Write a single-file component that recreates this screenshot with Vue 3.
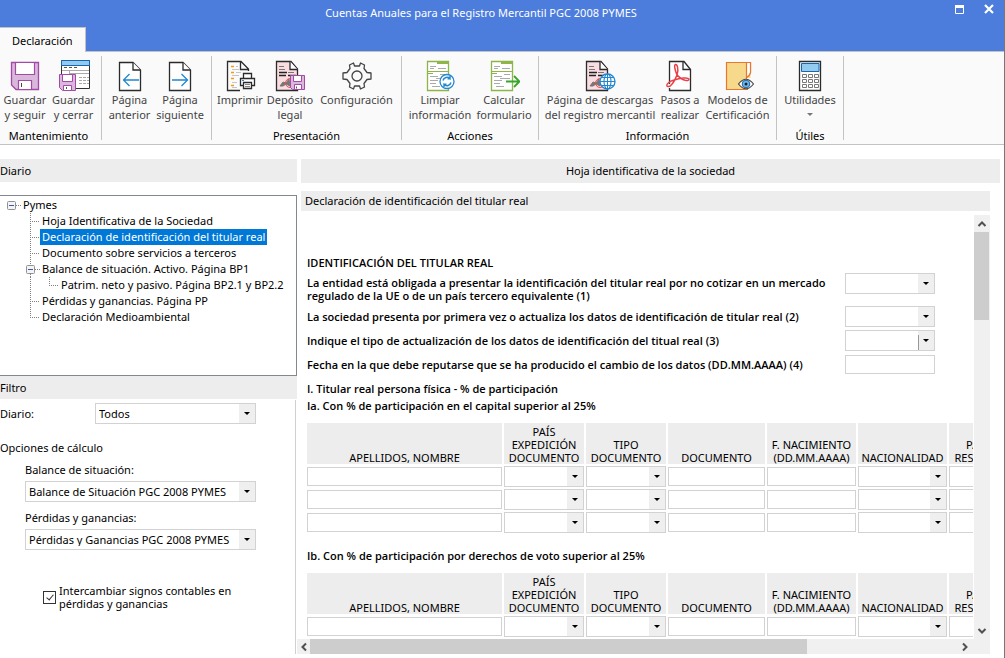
<script setup>
import { ref } from 'vue'

const page = (fill, stroke) =>
  `<path d="M5.500 2.500H19L26.500 10V30.500H5.500Z" fill="${fill}" stroke="${stroke}" stroke-width="1.300"/><path d="M19 2.500V10H26.500" fill="#fff" stroke="${stroke}" stroke-width="1.300"/>`

const disk = (x, y) =>
  `<path d="M${x} ${y}h14v14h-12l-2-2z" fill="#d9b8dc" stroke="#a24aa6"/><path d="M${x + 3} ${y}h8v6h-8zM${x + 4} ${y + 14}v-5h7v5z" fill="#fff" stroke="#a24aa6"/><path d="M${x + 6} ${y + 11}v2" stroke="#555"/>`

const certificate =
  '<path d="M2.500 1.500H17L23.500 9V30.500H2.500Z" fill="#f9dde1" stroke="#2b2b2b" stroke-width="1.300"/><path d="M16 1.500V9.500H23.500" fill="#fff" stroke="#2b2b2b" stroke-width="1.300"/><path d="M5 6.500h5M5 9.500h6M14 12.500h6" stroke="#777"/><path d="M5 12.500h8M5 15.500h7M14 15.500h8" stroke="#222" stroke-width="1.300"/><path d="M6 26l3-4 3 1 3-4 1 7-4-2-3 2z" fill="#777" stroke="#777"/><circle cx="16" cy="23" r="4.500" fill="none" stroke="#ef4a52"/>'

const greenForm =
  '<path d="M3.500 1.500h21v29h-21z" fill="#fff" stroke="#8db548" stroke-width="1.300"/><path d="M13 1h12v3H13z" fill="#8db548"/><path d="M3 11.500h22M3 13.500h6" stroke="#8db548"/><path d="M6 6.500h6M14 8.500h8M6 8.500h4M16 14.500h6M6 16.500h8M12 18.500h10M6 20.500h8M6 23.500h6M8 26.500h8" stroke="#aaa"/>'

const icons = {
  save:
    '<path d="M2.500 2.500h27v27h-22.500l-4.500-4.500z" fill="#d9b8dc" stroke="#a24aa6" stroke-width="1.300"/><path d="M6.500 2.500h19v12h-19zM9.500 29.500v-9h13v9z" fill="#fff" stroke="#a24aa6" stroke-width="1.200"/><path d="M12.500 23v4" stroke="#444"/>',
  saveClose:
    '<path d="M3.500 .5h28v28h-28z" fill="#fff" stroke="#333"/><path d="M3.500 .5h28v5h-28z" fill="#93caf0" stroke="#1667ad"/><path d="M6 7.500h3m2 0h3m2 0h3" stroke="#555"/><path d="M4 10.500h27M11.500 10v6M11 13.500h20M21 17.500h3m1 0h3m1 0h2M21 20.500h3m1 0h3m1 0h2M21 23.500h3m1 0h3m1 0h2" stroke="#aaa"/>' +
    '<path d="M1.500 14.500h16v16h-13l-3-3z" fill="#d9b8dc" stroke="#a24aa6"/><path d="M4.500 14.500h10v7h-10zM5.500 30.500v-5h8v5z" fill="#fff" stroke="#a24aa6"/><path d="M8.500 27v2" stroke="#555"/>',
  previous:
    page('#fff', '#2b2b2b') + '<path d="M25 20H10M15.500 14L9.500 20l6 6" fill="none" stroke="#2187d0" stroke-width="1.300"/>',
  next:
    page('#fff', '#2b2b2b') + '<path d="M8 20H23M17.500 14L23.500 20l-6 6" fill="none" stroke="#2187d0" stroke-width="1.300"/>',
  print:
    '<path d="M16 30.500H3.500V1.500H17L24.500 9v2M16.500 1.500V9.500H25" fill="none" stroke="#2b2b2b" stroke-width="1.300"/><path d="M7 6.500h3M7 12.500h3M7 18.500h3M7 25.500h3" stroke="#f39c12" stroke-width="1.500"/><path d="M8 9.500h7M8 15.500h7M8 22.500h5M8 27.500h5M12 12.500h5M12 6.500h2" stroke="#c5c5c5"/>' +
    '<path d="M19.500 18v-4.500h8V18" fill="#fff" stroke="#2b2b2b" stroke-width="1.300"/><path d="M16.500 18.500h14v7h-14z" fill="#fff" stroke="#2b2b2b" stroke-width="1.300"/><path d="M19.500 22.500h8v6h-8z" fill="#fff" stroke="#2b2b2b" stroke-width="1.300"/><path d="M21 24.500h5M21 26.500h5" stroke="#888"/><path d="M18 20.500h2" stroke="#2187d0"/>',
  deposit: certificate + disk(16.5, 15.5),
  settings:
    '<path d="M12.500 3l1 3h5l1-3 4 2-.5 3.500 3 4 4 .5v6l-4 .5-3 4 .5 3.500-4 2-1-3h-5l-1 3-4-2 .5-3.500-3-4-4-.5v-6l4-.5 3-4L8.500 5z" fill="none" stroke="#444" stroke-width="1.300" stroke-linejoin="round"/><circle cx="16" cy="16" r="5" fill="none" stroke="#444" stroke-width="1.300"/>',
  clean:
    greenForm +
    '<circle cx="23" cy="21.500" r="7" fill="#fff" stroke="#2187d0" stroke-width="1.300"/><path d="M19 20.500a4.200 4.200 0 0 1 7-2v-2.500M26.500 18.800h-3M27 22.500a4.200 4.200 0 0 1-7 2v2.500M19.500 24.200h3" fill="none" stroke="#2187d0" stroke-width="1.400"/>',
  calculate: greenForm + '<path d="M18 21.500h13M26 16l5.500 5.500L26 27" fill="none" stroke="#37a62b" stroke-width="1.800"/>',
  download:
    certificate +
    '<circle cx="23.500" cy="21.500" r="7.500" fill="#fff" stroke="#2187d0" stroke-width="1.300"/><ellipse cx="23.500" cy="21.500" rx="3.500" ry="7.500" fill="none" stroke="#2187d0" stroke-width="1.100"/><path d="M16 21.500h15M17.500 17.500h12M17.500 25.500h12M23.500 14v15" stroke="#2187d0"/>',
  pdf:
    '<path d="M5.500 24V1.500H20L26.500 9.500V30.500H5.500V28" fill="#fff" stroke="#2b2b2b" stroke-width="1.300"/><path d="M19 1.500V9.500H26.500" fill="none" stroke="#2b2b2b" stroke-width="1.300"/><path d="M13 15C10.500 9 10 5 11.500 4.500s3.500 4 1.500 10.500c-2 5-6 12-9 11.500C1 26 4 21.500 10 20c6-2 14-3 15-1 .5 2.500-6 2.500-12-4z" fill="none" stroke="#ea3f47" stroke-width="1.500"/>',
  folder:
    '<path d="M4.500 2.500h24v17l-4 10h-20z" fill="#f7d98c" stroke="none"/><path d="M26 29.500h-21.500v-27h24v10l-1.500 3-2.500 2v8" fill="none" stroke="#e8772e" stroke-width="1.200"/><path d="M25 18h5v8h-5z" fill="#fafafa"/><path d="M24.500 2.500h4v10l-1.500 3-2.500 2z" fill="#fff" stroke="#e8772e" stroke-width="1.200"/><path d="M16.500 24q7.500-9.500 15 0q-7.500 9.500-15 0z" fill="#fff" stroke="#444" stroke-width="1.200"/><circle cx="24" cy="24" r="3.800" fill="#6fb9ee" stroke="#1667ad"/><circle cx="24" cy="24" r="1.500" fill="#222"/>',
  calculator:
    '<path d="M5.500 1.500h21v29h-21z" fill="#fff" stroke="#2b2b2b" stroke-width="1.300"/><path d="M7.500 3.500h17.500v8h-17.500z" fill="#93caf0" stroke="#1667ad"/><path d="M8.500 14.500h4v3h-4zM14.500 14.500h4v3h-4zM20.500 14.500h4v3h-4zM8.500 19.500h4v3h-4zM14.500 19.500h4v3h-4zM20.500 19.500h4v3h-4zM8.500 24.500h4v3h-4zM14.500 24.500h4v3h-4zM20.500 24.500h4v3h-4z" fill="none" stroke="#777"/>',
}

const groups = [
  {
    title: 'Mantenimiento',
    first: true,
    items: [
      { icon: 'save', lines: ['Guardar', 'y seguir'], width: 50 },
      { icon: 'saveClose', lines: ['Guardar', 'y cerrar'], width: 47 },
    ],
  },
  {
    title: '',
    items: [
      { icon: 'previous', lines: ['Página', 'anterior'], width: 47 },
      { icon: 'next', lines: ['Página', 'siguiente'], width: 54 },
    ],
  },
  {
    title: 'Presentación',
    items: [
      { icon: 'print', lines: ['Imprimir'], width: 48 },
      { icon: 'deposit', lines: ['Depósito', 'legal'], width: 52 },
      { icon: 'settings', lines: ['Configuración'], width: 81 },
    ],
  },
  {
    title: 'Acciones',
    items: [
      { icon: 'clean', lines: ['Limpiar', 'información'], width: 68 },
      { icon: 'calculate', lines: ['Calcular', 'formulario'], width: 60 },
    ],
  },
  {
    title: 'Información',
    items: [
      { icon: 'download', lines: ['Página de descargas', 'del registro mercantil'], width: 114 },
      { icon: 'pdf', lines: ['Pasos a', 'realizar'], width: 46 },
      { icon: 'folder', lines: ['Modelos de', 'Certificación'], width: 69 },
    ],
  },
  {
    title: 'Útiles',
    items: [{ icon: 'calculator', lines: ['Utilidades'], menu: true, width: 58 }],
  },
]

const treeLines = {
  blank: '',
  root: 'M14 8.500h5',
  open: 'M9.500 0v4M9.500 13v3M14 8.500h5',
  branch: 'M9.500 0v16M11 8.500h8',
  corner: 'M9.500 0v9M11 8.500h8',
  vertical: 'M9.500 0v16',
}

const tree = [
  { cells: ['root'], text: 'Pymes' },
  { cells: ['blank', 'branch'], text: 'Hoja Identificativa de la Sociedad' },
  { cells: ['blank', 'branch'], text: 'Declaración de identificación del titular real' },
  { cells: ['blank', 'branch'], text: 'Documento sobre servicios a terceros' },
  { cells: ['blank', 'open'], text: 'Balance de situación. Activo. Página BP1' },
  { cells: ['blank', 'vertical', 'corner'], text: 'Patrim. neto y pasivo. Página BP2.1 y BP2.2' },
  { cells: ['blank', 'branch'], text: 'Pérdidas y ganancias. Página PP' },
  { cells: ['blank', 'corner'], text: 'Declaración Medioambiental' },
]

const selected = ref(2)
const swapSigns = ref(true)

const questions = [
  {
    id: 'q1',
    kind: 'select',
    tall: true,
    text: 'La entidad está obligada a presentar la identificación del titular real por no cotizar en un mercado regulado de la UE o de un país tercero equivalente (1)',
  },
  {
    id: 'q2',
    kind: 'select',
    text: 'La sociedad presenta por primera vez o actualiza los datos de identificación de titular real (2)',
  },
  {
    id: 'q3',
    kind: 'select',
    divided: true,
    text: 'Indique el tipo de actualización de los datos de identificación del titual real (3)',
  },
  {
    id: 'q4',
    kind: 'text',
    text: 'Fecha en la que debe reputarse que se ha producido el cambio de los datos (DD.MM.AAAA) (4)',
  },
]

const columns = [
  { key: 'name', lines: ['APELLIDOS, NOMBRE'] },
  { key: 'country', lines: ['PAÍS', 'EXPEDICIÓN', 'DOCUMENTO'], select: true },
  { key: 'kind', lines: ['TIPO', 'DOCUMENTO'], select: true },
  { key: 'document', lines: ['DOCUMENTO'] },
  { key: 'birth', lines: ['F. NACIMIENTO', '(DD.MM.AAAA)'] },
  { key: 'nationality', lines: ['NACIONALIDAD'], select: true },
  { key: 'residence', lines: ['PAÍS DE', 'RESIDENCIA'], select: true },
]

const tables = [
  { id: 'a', title: 'Ia. Con % de participación en el capital superior al 25%' },
  { id: 'b', title: 'Ib. Con % de participación por derechos de voto superior al 25%' },
]
</script>

<template>
  <div class="window">
    <header class="titlebar">
      <h1>Cuentas Anuales para el Registro Mercantil PGC 2008 PYMES</h1>
      <div class="window-buttons">
        <button type="button" aria-label="Maximizar">
          <svg width="12" height="12"><path d="M2.500 3.500h8v7h-8z" fill="none" stroke="#fff" /><path d="M2 2h9v3H2z" fill="#fff" /></svg>
        </button>
        <button type="button" aria-label="Cerrar">
          <svg width="12" height="12"><path d="M2 2l8 8M10 2l-8 8" stroke="#fff" stroke-width="2.200" /></svg>
        </button>
      </div>
      <button type="button" class="tab">Declaración</button>
    </header>

    <nav class="ribbon">
      <section v-for="(group, g) in groups" :key="g" class="group" :class="{ first: group.first }">
        <div class="group-items">
          <button v-for="item in group.items" :key="item.icon" type="button" class="tool" :style="{ width: item.width + 'px' }">
            <svg width="32" height="32" viewBox="0 0 32 32" aria-hidden="true" v-html="icons[item.icon]"></svg>
            <span v-for="line in item.lines" :key="line">{{ line }}</span>
            <i v-if="item.menu" class="menu-arrow"></i>
          </button>
        </div>
        <div class="group-title">{{ group.title }}</div>
      </section>
    </nav>

    <main class="body">
      <aside class="side">
        <h2 class="bar side-bar">Diario</h2>
        <ul class="tree">
          <li v-for="(node, n) in tree" :key="node.text">
            <svg v-for="(cell, c) in node.cells" :key="c" width="19" height="16" aria-hidden="true">
              <path :d="treeLines[cell]" class="dots" />
              <g v-if="cell === 'root' || cell === 'open'">
                <rect x="5.500" y="4.500" width="8" height="8" rx="1" fill="#f4f4f4" stroke="#919191" />
                <path d="M7 8.500h5" stroke="#3c5aa8" />
              </g>
            </svg>
            <button type="button" :class="{ selected: selected === n }" @click="selected = n">{{ node.text }}</button>
          </li>
        </ul>
        <h2 class="bar side-bar">Filtro</h2>
        <form class="filter" @submit.prevent>
          <div class="inline-field">
            <label for="diario">Diario:</label>
            <span class="combo"><select id="diario"><option>Todos</option></select></span>
          </div>
          <h3>Opciones de cálculo</h3>
          <div class="field">
            <label for="balance">Balance de situación:</label>
            <span class="combo"><select id="balance"><option>Balance de Situación PGC 2008 PYMES</option></select></span>
          </div>
          <div class="field">
            <label for="perdidas">Pérdidas y ganancias:</label>
            <span class="combo"><select id="perdidas"><option>Pérdidas y Ganancias PGC 2008 PYMES</option></select></span>
          </div>
          <label class="check">
            <input v-model="swapSigns" type="checkbox" />
            <span>Intercambiar signos contables en pérdidas y ganancias</span>
          </label>
        </form>
      </aside>

      <section class="content">
        <h2 class="bar main-bar">Hoja identificativa de la sociedad</h2>
        <h3 class="bar sub-bar">Declaración de identificación del titular real</h3>
        <div class="scroller">
          <div class="sheet">
            <h4 class="first-heading">IDENTIFICACIÓN DEL TITULAR REAL</h4>
            <div v-for="q in questions" :key="q.id" class="question" :class="{ tall: q.tall }">
              <label :for="q.id">{{ q.text }}</label>
              <span v-if="q.kind === 'select'" class="combo" :class="{ divided: q.divided }">
                <select :id="q.id"><option></option></select>
              </span>
              <input v-else :id="q.id" type="text" />
            </div>
            <h4 class="section-heading">I. Titular real persona física - % de participación</h4>
            <div v-for="t in tables" :key="t.id" class="holders">
              <h4>{{ t.title }}</h4>
              <table>
                <colgroup><col v-for="col in columns" :key="col.key" :class="col.key" /></colgroup>
                <thead>
                  <tr>
                    <th v-for="col in columns" :key="col.key" scope="col">
                      <div v-for="line in col.lines" :key="line">{{ line }}</div>
                    </th>
                  </tr>
                </thead>
                <tbody>
                  <tr v-for="r in 3" :key="r">
                    <td v-for="col in columns" :key="col.key">
                      <span v-if="col.select" class="combo">
                        <select :aria-label="col.lines.join(' ')"><option></option></select>
                      </span>
                      <input v-else type="text" :aria-label="col.lines.join(' ')" />
                    </td>
                  </tr>
                </tbody>
              </table>
            </div>
          </div>
          <div class="vbar">
            <button type="button" aria-label="Subir"><svg width="10" height="8"><path d="M1.500 6L5 2.500 8.500 6" class="chevron" /></svg></button>
            <div class="vthumb"></div>
            <button type="button" class="end" aria-label="Bajar"><svg width="10" height="8"><path d="M1.500 2L5 5.500 8.500 2" class="chevron" /></svg></button>
          </div>
          <div class="hbar">
            <button type="button" aria-label="Izquierda"><svg width="8" height="10"><path d="M6 1.500L2.500 5 6 8.500" class="chevron" /></svg></button>
            <div class="htrack"><div class="hthumb"></div></div>
            <button type="button" aria-label="Derecha"><svg width="8" height="10"><path d="M2 1.500L5.500 5 2 8.500" class="chevron" /></svg></button>
          </div>
          <div class="corner"></div>
        </div>
      </section>
    </main>
  </div>
</template>

<style>
body {
  margin: 0;
}
</style>

<style scoped>
.window {
  display: flex;
  flex-direction: column;
  box-sizing: border-box;
  height: 100vh;
  min-height: 400px;
  overflow: hidden;
  border-right: 1px solid #777;
  background: #fff;
  color: #000;
  font: 11px/13px "Noto Sans", "Open Sans", sans-serif;
}
button,
input,
select {
  box-sizing: border-box;
  margin: 0;
  padding: 0;
  border: 0;
  background: none;
  color: inherit;
  font: inherit;
}
svg {
  display: block;
  flex: none;
}
h1,
h2,
h3,
h4,
ul {
  margin: 0;
  padding: 0;
  font-size: 11px;
  font-weight: normal;
}

.titlebar {
  position: relative;
  display: flex;
  flex: none;
  flex-direction: column;
  justify-content: space-between;
  align-items: flex-start;
  height: 51px;
  border-bottom: 1px solid #c3c3c3;
  background: #4c7cdc;
}
.titlebar h1 {
  align-self: center;
  margin-right: 42px;
  color: #fff;
  line-height: 26px;
}
.window-buttons {
  position: absolute;
  top: 3px;
  right: 9px;
  display: flex;
  gap: 18px;
}
.tab {
  height: 25px;
  padding: 0 12px;
  margin-bottom: -1px;
  border-top: 1px solid #c3c3c3;
  border-right: 1px solid #c3c3c3;
  background: #fafafa;
}

.ribbon {
  display: flex;
  flex: none;
  height: 92px;
  border-bottom: 1px solid #c3c3c3;
  background: #fafafa;
}
.group {
  display: flex;
  flex-direction: column;
  justify-content: space-between;
  margin: 4px 0;
  padding: 4px 4px 0;
  border-right: 1px solid #c3c3c3;
}
.group.first {
  padding-left: 0;
}
.group-items {
  display: flex;
  align-items: flex-start;
}
.tool {
  display: flex;
  flex-direction: column;
  align-items: center;
  color: #444;
  line-height: 15px;
  white-space: nowrap;
}
.menu-arrow {
  margin-top: 6px;
  border: 3px solid transparent;
  border-top-color: #777;
}
.group-title {
  margin-bottom: -2px;
  text-align: center;
}

.body {
  display: flex;
  flex: 1;
  min-height: 0;
  padding-top: 14px;
}
.bar {
  flex: none;
  background: #ededed;
}
.side {
  display: flex;
  flex: none;
  flex-direction: column;
  width: 297px;
}
.side-bar {
  line-height: 23px;
}
.tree {
  flex: none;
  box-sizing: border-box;
  height: 181px;
  margin-top: 13px;
  padding: 1px 2px;
  border: 1px solid #828790;
  border-left: 0;
  list-style: none;
}
.tree li {
  display: flex;
  height: 16px;
}
.tree button {
  padding: 0 2px;
  line-height: 16px;
  white-space: nowrap;
}
.tree .selected {
  background: #0078d7;
  color: #fff;
}
.dots {
  fill: none;
  stroke: #808080;
  stroke-dasharray: 1 1;
}
.filter {
  flex: 1;
  margin: 1px 1px 4px 0;
  padding-top: 3px;
  border-right: 1px solid #d0d0d0;
}
.filter h3 {
  margin: 17px 0 9px;
  line-height: 13px;
}
.inline-field {
  display: grid;
  grid-template-columns: 95px 161px;
  align-items: center;
}
.field {
  width: 231px;
  margin: 0 0 9px 25px;
}
.field label {
  display: block;
  margin-bottom: 5px;
}
.check {
  display: flex;
  align-items: center;
  gap: 3px;
  width: 200px;
  margin: 34px 0 0 43px;
}
.check input {
  position: relative;
  flex: none;
  width: 13px;
  height: 13px;
  border: 1px solid #333;
  appearance: none;
}
.check input:checked::after {
  content: "";
  position: absolute;
  top: 1px;
  left: 4px;
  width: 3px;
  height: 6px;
  border: solid #333;
  border-width: 0 1px 1px 0;
  transform: rotate(40deg);
}

.combo {
  position: relative;
  display: block;
  height: 21px;
}
.combo::after {
  content: "";
  position: absolute;
  top: 9px;
  right: 6px;
  border: 3px solid transparent;
  border-top-color: #000;
  border-bottom: 0;
  pointer-events: none;
}
select {
  display: block;
  width: 100%;
  height: 21px;
  padding: 0 18px 0 3px;
  border: 1px solid #d2d2d2;
  background: linear-gradient(#efefef, #efefef) right / 16px 100% no-repeat #fff;
  appearance: none;
}
.divided select {
  background: linear-gradient(#999, #999) right 15px bottom / 1px 15px no-repeat,
    linear-gradient(#efefef, #efefef) right / 16px 100% no-repeat #fff;
}
input[type="text"] {
  display: block;
  width: 100%;
  height: 19px;
  border: 1px solid #d2d2d2;
  background: #fff;
}

.content {
  display: flex;
  flex: 1;
  flex-direction: column;
  min-width: 0;
  padding-bottom: 4px;
}
.main-bar {
  margin: 0 4px;
  line-height: 24px;
  text-align: center;
}
.sub-bar {
  margin: 8px 14px 4px 4px;
  padding-left: 4px;
  line-height: 20px;
}
.scroller {
  display: grid;
  flex: 1;
  grid-template-columns: minmax(0, 1fr) 16px;
  grid-template-rows: minmax(0, 1fr) 15px;
  min-height: 0;
  margin-right: 14px;
}
.sheet {
  overflow: hidden;
  margin: 0 1px 1px 0;
  padding-left: 10px;
}
.sheet h4,
.question label {
  font-family: "Open Sans", "Noto Sans", sans-serif;
  font-weight: 600;
}
.first-heading {
  margin: 41px 0 4px;
}
.question {
  display: grid;
  grid-template-columns: 530px 90px;
  column-gap: 8px;
  align-items: center;
  height: 24px;
}
.question.tall {
  height: 31px;
  align-items: start;
}
.question.tall label {
  padding-top: 3px;
}
.section-heading {
  margin: 6px 0 4px;
}
.holders {
  height: 150px;
}
.holders table {
  width: 720px;
  margin: 9px 0 0 -2px;
  border-spacing: 2px;
  table-layout: fixed;
}
.name {
  width: 195px;
}
.country,
.kind {
  width: 80px;
}
.document {
  width: 97px;
}
.birth,
.nationality {
  width: 89px;
}
.residence {
  width: 74px;
}
th {
  height: 41px;
  padding: 0;
  background: #ededed;
  font-weight: normal;
  vertical-align: bottom;
  white-space: nowrap;
}
td {
  height: 21px;
  padding: 0;
}

.vbar,
.hbar,
.corner {
  background: #f0f0f0;
}
.vbar {
  display: flex;
  flex-direction: column;
}
.vbar button {
  display: flex;
  flex: none;
  justify-content: center;
  align-items: center;
  height: 17px;
}
.vthumb {
  height: 88px;
  margin-right: 1px;
  background: #cdcdcd;
}
.vbar .end {
  margin-top: auto;
}
.hbar {
  display: flex;
}
.hbar button {
  display: flex;
  flex: none;
  justify-content: center;
  align-items: center;
  width: 13px;
}
.hbar button:last-child {
  width: 18px;
}
.htrack {
  flex: 1;
}
.hthumb {
  width: 77%;
  height: 15px;
  background: #cdcdcd;
}
.chevron {
  fill: none;
  stroke: #505050;
  stroke-width: 2;
}
</style>
